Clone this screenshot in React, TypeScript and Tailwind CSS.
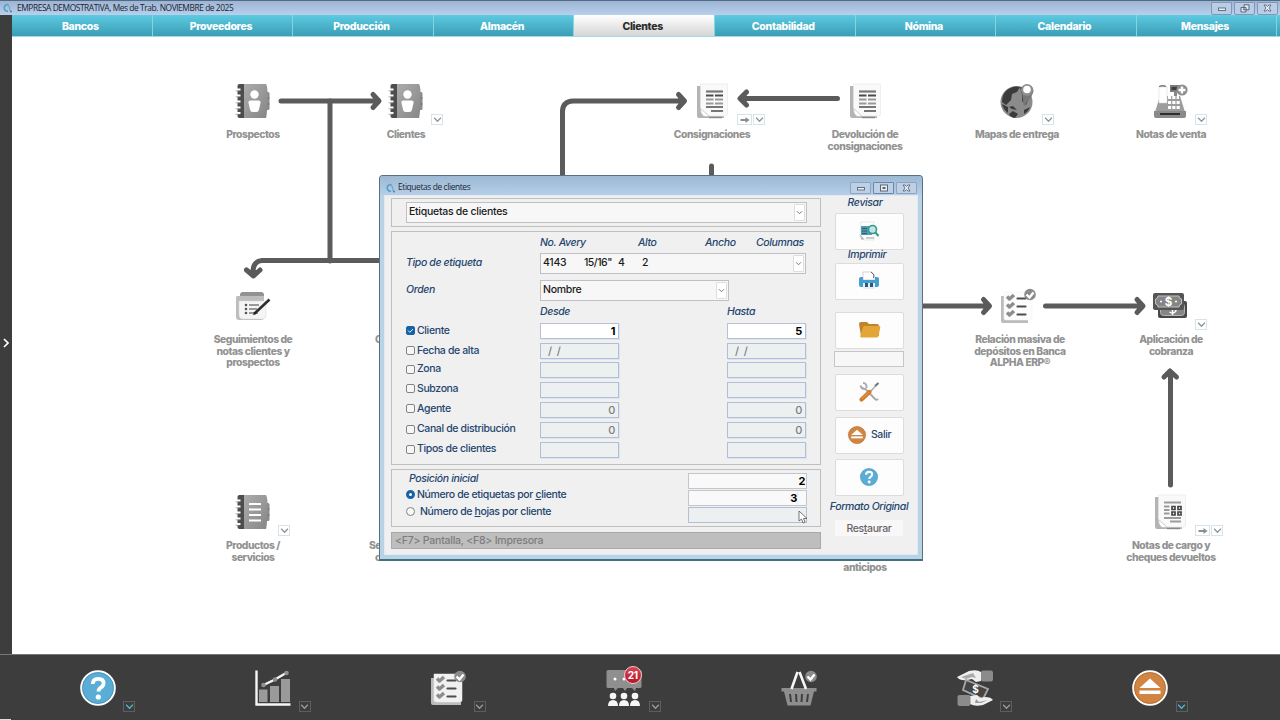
import React from 'react';

type Extra = 'menu' | 'both';

/* ---------- Icons ---------- */

const ContactBook = ({ list = false }: { list?: boolean }) => (
  <svg viewBox="0 0 36 36" className="w-9 h-9">
    <defs>
      <linearGradient id="cover" x1="0" y1="0" x2="1" y2="1">
        <stop offset="0" stopColor="#acacac" />
        <stop offset="1" stopColor="#868686" />
      </linearGradient>
    </defs>
    <rect x="30" y="9" width="4.500" height="18" rx="1.5" fill="#8b8b8b" />
    <path d="M30 15h4.500M30 21h4.500" stroke="#6d6d6d" strokeWidth="1" />
    <path d="M9 1h22q2 2.500 1.500 17T31 35H9z" fill="url(#cover)" />
    <path d="M4.500 1H9v34H4.500q-2 0-2-2V3q0-2 2-2z" fill="#4d4d4d" />
    <path d="M.500 6.500h5M.500 12.500h5M.500 18.500h5M.500 24.500h5M.500 30h5" stroke="#fff" strokeWidth="2" />
    <path d="M.500 7.800h4M.500 13.800h4M.500 19.800h4M.500 25.800h4M.500 31.300h4" stroke="#999" strokeWidth="0.7" />
    {list ? (
      <path d="M14 10h12M14 15.500h12M14 21h12M14 26.500h12" stroke="#fff" strokeWidth="2.200" />
    ) : (
      <>
        <circle cx="19.500" cy="11.500" r="4.200" fill="#fff" />
        <path d="M15.500 17.500h8q2.500 0 2 2.500l-1.500 6.500q-.5 2.500-2.500 2.500h-4q-2 0-2.500-2.500L13.500 20q-.5-2.500 2-2.500z" fill="#fff" />
      </>
    )}
  </svg>
);

const Invoice = ({ qr = false }: { qr?: boolean }) => (
  <svg viewBox="0 0 36 36" className="w-9 h-9">
    <path d="M3 3h27v32H5q-2 0-2-2z" fill="#b4b4b4" />
    <path d="M6.500 1h27v30q0 2-2 2H15L6.500 26z" fill="#f9f9f9" stroke="#e6e6e6" strokeWidth="0.6" />
    <path d="M6.500 25.500l9 8H10q-4-3-3.500-8z" fill="#fff" stroke="#aaa" strokeWidth="0.5" />
    <path d="M15 34.500h13" stroke="#888" strokeWidth="1.4" />
    {qr ? (
      <>
        <path d="M12 8.500h17M12 12.500h5.500M12 16h5.500M12 19.500h5.500M12 24h17M18 27.500h11" stroke="#9b9b9b" strokeWidth="1.800" />
        <path d="M20 12.500h3v3h-3zM26 12.500h3v3h-3zM20 18h3v3h-3zM26 18h3v3h-3z" fill="none" stroke="#444" strokeWidth="1.700" />
      </>
    ) : (
      <>
        <path d="M12 8.500h17" stroke="#777" strokeWidth="2.200" />
        <path d="M12 12.500h7.500M21 12.500h8" stroke="#4b4b4b" strokeWidth="2" />
        <path d="M12 16.500h7.500M21 16.500h8M12 20.500h7.500M21 20.500h8" stroke="#999" strokeWidth="2" />
        <path d="M12 24h17M17 28h12" stroke="#777" strokeWidth="1.800" />
      </>
    )}
  </svg>
);

const Globe = () => (
  <svg viewBox="0 0 36 36" className="w-9 h-9">
    <circle cx="17.500" cy="19" r="16" fill="#8b8b8b" />
    <path d="M8 7q7-5 13-3l-3 5-5 2-1 6-5 5-4-3q0-8 5-12zM21 4l5 1 5 8-4 9-4-4 0-6zM3 21l6 3 0 6q-5-4-6-9zM10 24l4-1 4 4-5-1zM25 27l6-3q-2 5-6 7zM14 28l5 3-3 4q-5-1-6-4z" fill="#3b3b3b" />
    <path d="M27.500 2q7 0 7 6 0 4-9.500 15-1-3-2-14Q23 2 27.500 2z" fill="#777" />
    <circle cx="28" cy="7" r="6" fill="#8e8e8e" />
    <circle cx="28" cy="6.500" r="3.800" fill="#fff" />
  </svg>
);

const Register = () => (
  <svg viewBox="0 0 36 36" className="w-9 h-9">
    <path d="M18 2h12v7H18z" fill="#7b7b7b" />
    <path d="M19.500 4h6v3h-6z" fill="#3f3f3f" />
    <path d="M22 8h3v5h-3z" fill="#888" />
    <path d="M8 13h20l5 16H3z" fill="#9d9d9d" />
    <path d="M2 28h32v5q0 2-2 2H4q-2 0-2-2z" fill="#8a8a8a" />
    <path d="M8 31h20" stroke="#2e2e2e" strokeWidth="2" />
    <path d="M7 4h8v16H7z" fill="#fff" stroke="#d5d5d5" strokeWidth="0.5" />
    <path d="M7 3.500q4-1.500 7 0" stroke="#777" strokeWidth="1.300" fill="none" />
    <path d="M16 14.500h11M16 19.500h12M16 24.500h12" stroke="#fff" strokeWidth="3.200" strokeDasharray="3.100 1.200" />
    <circle cx="30" cy="7" r="5.600" fill="#8d8d8d" />
    <path d="M30 3.500v7M26.500 7h7" stroke="#fff" strokeWidth="2.400" />
  </svg>
);

const NotePen = () => (
  <svg viewBox="0 0 36 36" className="w-9 h-9">
    <path d="M5 7q0-3 3-3h18q3 0 3 3v20H5z" fill="#929292" />
    <path d="M1 9q0-1 2-1h26v21q0 3-3 3H4q-3 0-3-3z" fill="#bdbdbd" />
    <path d="M4 13h27v13q0 5-4 5H8q-4 0-4-4z" fill="#f5f5f5" stroke="#d5d5d5" strokeWidth="0.5" />
    <circle cx="11" cy="17" r="1.300" fill="#555" />
    <circle cx="11" cy="21" r="1.300" fill="#555" />
    <circle cx="11" cy="25" r="1.300" fill="#555" />
    <path d="M14 17h10M14 21h8M14 25h9" stroke="#999" strokeWidth="1.800" />
    <path d="M19 26L34.500 11.500" stroke="#2c2c2c" strokeWidth="2.600" />
    <path d="M17.500 27.500l3-4 1.500 1.500z" fill="#222" />
  </svg>
);

const Checklist = ({ filled = false }: { filled?: boolean }) => (
  <svg viewBox="0 0 36 36" className="w-9 h-9">
    {filled ? (
      <path d="M1 8h4v24h26v3H3q-2 0-2-2z" fill="#bcbcbc" />
    ) : (
      <path d="M1 8h4v24h23v3H3q-2 0-2-2z" fill="#bcbcbc" />
    )}
    <path d="M4 4h28v26q0 2-2 2H6q-2 0-2-2z" fill={filled ? '#f1f1f1' : '#fcfcfc'} stroke={filled ? '#f1f1f1' : '#f0f0f0'} strokeWidth="0.500" />
    <path d="M7 8.500l2.500 2.500L14 7M7 16.500L9.500 19 14 15M7 24.500L9.500 27 14 23" fill="none" stroke="#8d8d8d" strokeWidth="3.400" strokeLinejoin="round" />
    <path d="M17.500 10.500h8M17.500 18.500h8M17.500 26.500h8" stroke="#4d4d4d" strokeWidth="2.200" strokeLinecap="round" />
    <circle cx="30" cy="6.500" r="5.800" fill="#8b8b8b" />
    <path d="M26.500 6.500l3 3 4-5" fill="none" stroke="#fff" strokeWidth="2.400" />
  </svg>
);

const Bills = () => (
  <svg viewBox="0 0 36 36" className="w-9 h-9 font-['Inter',sans-serif]">
    <rect x="6" y="13" width="29" height="17" rx="2" fill="#484848" />
    <rect x="8.500" y="15.500" width="24" height="12" rx="3" fill="#858585" stroke="#b5b5b5" strokeWidth="1" />
    <path d="M17.500 24q3 2 5.500 0t-1-3M20.500 22v5" fill="none" stroke="#fff" strokeWidth="1.500" />
    <rect x="1" y="5" width="31" height="17" rx="2" fill="#555" />
    <path d="M6 8h21q0 3 2.500 3v5q-2.500 0-2.500 3H6q0-3-2.500-3v-5Q6 11 6 8z" fill="#858585" stroke="#c2c2c2" strokeWidth="1" />
    <text x="16.500" y="17.700" textAnchor="middle" fontSize="11.500" fontWeight="700" fill="#fff">$</text>
    <path d="M8 13.500h2M23 13.500h2" stroke="#fff" strokeWidth="1.500" />
  </svg>
);

const HelpCircle = () => (
  <svg viewBox="0 0 36 36" className="w-full h-full">
    <circle cx="18" cy="18" r="16.800" fill="#5aaed6" stroke="#fff" strokeWidth="2" />
    <circle cx="18" cy="18" r="15.500" fill="none" stroke="#4187ae" strokeWidth="0.700" />
    <path d="M12.800 14q0-5.200 5.500-5.200 5.300 0 5.300 4.500 0 2.500-2.800 4.300-2.300 1.400-2.300 4" fill="none" stroke="#fff" strokeWidth="3.800" />
    <circle cx="18.300" cy="27" r="2.600" fill="#fff" />
  </svg>
);

const ExitCircle = () => (
  <svg viewBox="0 0 36 36" className="w-full h-full">
    <circle cx="18" cy="18" r="16.800" fill="#d08543" stroke="#fff" strokeWidth="2" />
    <circle cx="18" cy="18" r="15.500" fill="none" stroke="#a96429" strokeWidth="0.700" />
    <path d="M18 8.500L28.500 18h-21z" fill="#fff" />
    <path d="M7.500 20.500h21v3.500h-21z" fill="#fff" />
  </svg>
);

const ChartIcon = () => (
  <svg viewBox="0 0 36 36" className="w-9 h-9">
    <path d="M4 19.500h8.500V32H4zM15 16h9v16h-9zM26 9h9v23h-9z" fill="#9a9a9a" />
    <path d="M1.500 0.500v34h34" fill="none" stroke="#f6f6f6" strokeWidth="2.400" />
    <path d="M8.500 15L20 9.500 31 3" fill="none" stroke="#f5f5f5" strokeWidth="2.400" />
    <circle cx="8.500" cy="15" r="2.300" fill="#909090" />
    <circle cx="20" cy="9.500" r="2.300" fill="#909090" />
    <circle cx="31.500" cy="3" r="2.300" fill="#909090" />
  </svg>
);

const Meeting = () => (
  <svg viewBox="0 0 36 36" className="w-9 h-9">
    <path d="M2 0h32q1.500 0 1.500 1.500v15q0 1.500-1.500 1.500h-4l-1 3-3-3h-5l-2 3-2-3h-5l-3 3-1-3H2q-1.500 0-1.500-1.500v-15Q.500 0 2 0z" fill="#8f8f8f" />
    <circle cx="9" cy="9" r="1.500" fill="#fff" />
    <circle cx="18" cy="9" r="1.500" fill="#fff" />
    <path d="M2 36q0-6 5-6t5 6zM13 36q0-6 5-6t5 6zM24 36q0-6 5-6t5 6z" fill="#f6f6f6" />
    <circle cx="7" cy="26" r="3.300" fill="#f6f6f6" />
    <circle cx="18" cy="26" r="3.300" fill="#f6f6f6" />
    <circle cx="29" cy="26" r="3.300" fill="#f6f6f6" />
  </svg>
);

const Basket = () => (
  <svg viewBox="0 0 36 36" className="w-9 h-9">
    <path d="M.500 18h35v3.500H33L29.500 35.500h-23L3 21.500H.500z" fill="#8e8e8e" />
    <path d="M9 24l1 8M15 24l.500 8M21 24l-.500 8M27 24l-1 8" stroke="#3f3f3f" strokeWidth="2" />
    <path d="M16.500 2L10.500 19M18.500 2l6.500 17" stroke="#f5f5f5" strokeWidth="2.600" />
    <circle cx="30" cy="6.500" r="5.800" fill="#8b8b8b" />
    <path d="M26.500 6.500l3 3 4-5" fill="none" stroke="#fff" strokeWidth="2.400" />
  </svg>
);

const Payment = () => (
  <svg viewBox="0 0 36 36" className="w-9 h-9 font-['Inter',sans-serif]">
    <path d="M0 7L12 1q8-2 12 1v9l-5 1-4-3-5 1q-7 1-10-3z" fill="#efefef" />
    <path d="M4 7l12-4 3 5-4-1-6 2z" fill="#a9a9a9" />
    <rect x="24" y="0.500" width="12" height="11" rx="2" fill="#8b8b8b" />
    <path d="M9 10l22 9-5 10-20-9z" fill="#444" stroke="#a7a7a7" strokeWidth="1.800" />
    <text x="18.500" y="22.500" textAnchor="middle" fontSize="10" fontWeight="700" fill="#fff">$</text>
    <path d="M36 30l-10 5q-8 2-13-1v-8l7-1 3 3 5-1q6 0 8 3z" fill="#efefef" />
    <path d="M19 29l3 3 9-2-7 3h-6z" fill="#999" />
    <rect x="0.500" y="25" width="13" height="11" rx="2" fill="#8b8b8b" />
  </svg>
);

const Logo = () => (
  <svg viewBox="0 0 10 10" className="w-[10px] h-[10px] shrink-0">
    <path d="M6.500 1.800A3.300 3.300 0 1 0 6 8.200" fill="none" stroke="#4da0ca" strokeWidth="1.600" />
    <path d="M5 1.500q3 1 3 6.500" fill="none" stroke="#7da4c5" strokeWidth="1.300" />
    <circle cx="9" cy="8.500" r="0.900" fill="#327faf" />
  </svg>
);

const ReviewIcon = () => (
  <svg viewBox="0 0 22 22" className="w-[22px] h-[22px]">
    <path d="M3 2h13v18H5l-3-4z" fill="#fff" stroke="#dedede" strokeWidth="0.700" />
    <path d="M1.500 14l5 5-3 1z" fill="#bbb" />
    <path d="M3 6h11v9H3z" fill="#4b9fb2" />
    <path d="M4 8.500h5M4 11h5M4 13.500h5" stroke="#365c68" strokeWidth="1.100" />
    <path d="M8 18h8" stroke="#999" strokeWidth="1" />
    <circle cx="14.500" cy="9.500" r="4" fill="#bfe3ef" stroke="#369a85" strokeWidth="1.600" />
    <path d="M17.500 12.500l3 3.500" stroke="#369a85" strokeWidth="2" />
  </svg>
);

const PrintIcon = () => (
  <svg viewBox="0 0 22 22" className="w-[22px] h-[22px]">
    <path d="M5 2h9l2 3v5H5z" fill="#fff" stroke="#bbb" strokeWidth="0.600" />
    <path d="M13 2l3 3-.500 3" stroke="#666" strokeWidth="1" fill="none" />
    <path d="M3 7h2v3h12V7h2q2 0 2 2v6q0 2-2 2H3q-2 0-2-2V9q0-2 2-2z" fill="#449fd0" />
    <path d="M5 13h12v5q0 1-1 1H6q-1 0-1-1z" fill="#e3eff6" />
    <path d="M7 13h3v4H7zM12 13h3v4h-3z" fill="#2c5873" />
  </svg>
);

const FolderIcon = () => (
  <svg viewBox="0 0 24 20" className="w-6 h-5">
    <path d="M2 4q0-2 2-2h6l2 2h8q2 0 2 2v10H4z" fill="#c0822c" />
    <path d="M6 7q.300-1 1.500-1H22q1.500 0 1.300 1.500L21.500 16q-.300 1.500-2 1.500H5q-2 0-1.800-1z" fill="#e3a536" />
  </svg>
);

const ToolsIcon = () => (
  <svg viewBox="0 0 22 22" className="w-[22px] h-[22px]">
    <path d="M2.500 4.500q1 4 5 3.500l9.500 10q1.500 1.500 3 0M5 2q4 0 3.500 5" fill="none" stroke="#aaa" strokeWidth="2" />
    <path d="M12 11l7-7.500" stroke="#aaa" strokeWidth="1.400" />
    <path d="M17 5l3.500-3" stroke="#777" strokeWidth="2.200" />
    <path d="M3.500 18.500l8-7.500" stroke="#d27b2b" strokeWidth="4.200" strokeLinecap="round" />
    <path d="M4 17.500l6.500-6" stroke="#efa45d" strokeWidth="1" />
  </svg>
);

const Chevron = ({ className }: { className?: string }) => (
  <svg viewBox="0 0 8 6" className={className}>
    <path d="M1 1.500l3 3 3-3" fill="none" stroke="currentColor" strokeWidth="1.200" />
  </svg>
);

const CloseMark = () => (
  <svg viewBox="0 0 9 8" className="w-[9px] h-2">
    <path d="M1 1h2l1.500 1.500L6 1h2L6 4l2 3H6L4.500 5.500 3 7H1l2-3z" fill="#eef2f8" stroke="#59677a" strokeWidth="0.900" />
  </svg>
);

/* ---------- Main window ---------- */

const WindowButtons = () => (
  <div className="flex gap-[2px] text-[#59677a]">
    <span className="w-[21px] h-[13px] border border-[#8397b3] bg-[#b9cde6] rounded-b-[2px] flex items-center justify-center">
      <svg viewBox="0 0 10 8" className="w-[10px] h-2"><rect x="1.500" y="4" width="7" height="2.500" fill="#eee" stroke="currentColor" strokeWidth="0.900" /></svg>
    </span>
    <span className="w-[21px] h-[13px] border border-[#8397b3] bg-[#b9cde6] rounded-b-[2px] flex items-center justify-center">
      <svg viewBox="0 0 10 9" className="w-[10px] h-[9px]"><path d="M4 .800h5v5H4zM1 3.500h5v4.500H1z" fill="#e3e9f2" stroke="currentColor" strokeWidth="1" /><path d="M3 5.500h1" stroke="currentColor" /></svg>
    </span>
    <span className="w-[21px] h-[13px] border border-[#8397b3] bg-[#b9cde6] rounded-b-[2px] flex items-center justify-center">
      <CloseMark />
    </span>
  </div>
);

const tabs = ['Bancos', 'Proveedores', 'Producción', 'Almacén', 'Clientes', 'Contabilidad', 'Nómina', 'Calendario', 'Mensajes'];

const nodes: { pos: string; icon: React.ReactNode; label: string[]; extra?: Extra; labelClass?: string }[] = [
  { pos: 'left-[171px] top-[46px]', icon: <ContactBook />, label: ['Prospectos'] },
  { pos: 'left-[324px] top-[46px]', icon: <ContactBook />, label: ['Clientes'], extra: 'menu' },
  { pos: 'left-[630px] top-[46px]', icon: <Invoice />, label: ['Consignaciones'], extra: 'both' },
  { pos: 'left-[783px] top-[46px]', icon: <Invoice />, label: ['Devolución de', 'consignaciones'] },
  { pos: 'left-[935px] top-[46px]', icon: <Globe />, label: ['Mapas de entrega'], extra: 'menu' },
  { pos: 'left-[1088px] top-[46px]', icon: <Register />, label: ['Notas de venta'], extra: 'menu', labelClass: 'pl-[2px]' },
  { pos: 'left-[171px] top-[251px]', icon: <NotePen />, label: ['Seguimientos de', 'notas clientes y', 'prospectos'] },
  { pos: 'left-[936px] top-[251px]', icon: <Checklist />, label: ['Relación masiva de', 'depósitos en Banca', 'ALPHA ERP®'], labelClass: 'pl-1' },
  { pos: 'left-[1088px] top-[251px]', icon: <Bills />, label: ['Aplicación de', 'cobranza'], extra: 'menu', labelClass: 'pl-[2px]' },
  { pos: 'left-[171px] top-[457px]', icon: <ContactBook list />, label: ['Productos /', 'servicios'], extra: 'menu' },
  { pos: 'left-[1088px] top-[457px]', icon: <Invoice qr />, label: ['Notas de cargo y', 'cheques devueltos'], extra: 'both', labelClass: 'pl-[2px]' },
];

const FlowNode = ({ pos, icon, label, extra, labelClass = '' }: (typeof nodes)[number]) => (
  <div className={`absolute w-[140px] flex flex-col items-center ${pos}`}>
    {icon}
    <div className={`mt-[10px] text-center text-[10.3px] leading-[11.5px] tracking-[-0.45px] font-extrabold text-[#929292] whitespace-nowrap ${labelClass}`}>
      {label.map((line) => (
        <div key={line}>{line}</div>
      ))}
    </div>
    {extra && (
      <div className={`absolute top-[31px] flex gap-px text-[#8f979c] ${extra === 'both' ? 'left-[95px]' : 'left-[95px]'}`}>
        {extra === 'both' && (
          <span className="w-[15px] h-[11px] border border-[#d3e4ea] bg-white flex items-center justify-center">
            <svg viewBox="0 0 10 6" className="w-[10px] h-[6px]"><path d="M.500 3h6" stroke="#8c8c8c" strokeWidth="2" /><path d="M5.500 0L9.500 3l-4 3z" fill="#8c8c8c" /></svg>
          </span>
        )}
        <span className="w-3 h-[11px] border border-[#d3e4ea] bg-white flex items-center justify-center">
          <Chevron className="w-[9px] h-[7px]" />
        </span>
      </div>
    )}
  </div>
);

const Connectors = () => (
  <svg viewBox="12 37 1268 617" className="absolute inset-0 w-[1268px] h-[617px]">
    <g fill="none" stroke="#5b5b5b" strokeWidth="5" strokeLinecap="round" strokeLinejoin="round">
      <path d="M281 101H378M373 94.500L379 101L373 107.500" />
      <path d="M330 101V261M385 260.500H262Q254 261 253 270V275M246.500 270L253.500 276L260 270" />
      <path d="M562.500 180V111Q563 101.500 573 101H684M678.500 94.500L684.500 101L678.500 107.500" />
      <path d="M837.500 98.500H741M746.500 92L740 98.500L746.500 105" />
      <path d="M711.500 166V180" />
      <path d="M915 306H989M983.500 299.500L989.500 306L983.500 312.500" />
      <path d="M1045.500 306H1142M1137 299.500L1143 306L1137 312.500" />
      <path d="M1170.500 485V372M1164 377L1170 371L1176.500 377" />
    </g>
    <g fill="#5b5b5b">
      <path d="M373 94v14l7-7zM678.500 94v14l7-7zM746.500 91.500v14l-7-7zM983.500 299v14l7-7zM1137 299v14l7-7zM1163.500 377h13.500l-7-7zM246 270h14.500l-7 7z" />
    </g>
  </svg>
);

const dock: { icon: React.ReactNode; menu?: string; badge?: string }[] = [
  { icon: <HelpCircle />, menu: 'text-[#4fb6cc]' },
  { icon: <ChartIcon />, menu: 'text-[#9a9a9a]' },
  { icon: <Checklist filled />, menu: 'text-[#9a9a9a]' },
  { icon: <Meeting />, menu: 'text-[#9a9a9a]', badge: '21' },
  { icon: <Basket /> },
  { icon: <Payment />, menu: 'text-[#9a9a9a]' },
  { icon: <ExitCircle />, menu: 'text-[#4fb6cc]' },
];

const Dock = () => (
  <footer className="relative h-[66px] shrink-0 bg-[#3d3d3d] border-t border-[#777] flex pl-[10px]">
    {dock.map((item, index) => (
      <div key={index} className="w-[175.4px] flex justify-center pt-[15px]">
        <div className="relative w-9 h-9">
          {item.icon}
          {item.badge && (
            <span className="absolute left-[18px] -top-1 w-[18px] h-[18px] rounded-full border border-[#f0c9cd] bg-gradient-to-b from-[#dc4353] to-[#b70f27] text-white text-[10px] leading-4 tracking-[-0.3px] font-bold text-center">
              {item.badge}
            </span>
          )}
          {item.menu && (
            <span className={`absolute left-[43.5px] top-[31px] w-3 h-[11px] border border-[#5c5f61] flex items-center justify-center ${item.menu}`}>
              <Chevron className="w-[9px] h-[7px]" />
            </span>
          )}
        </div>
      </div>
    ))}
    <span className="absolute left-0 bottom-0 w-[11px] h-px bg-[#ddd]" />
  </footer>
);

/* ---------- Dialog ---------- */

const DropButton = () => (
  <span className="w-[11px] h-[17px] mr-px border border-[#dedede] bg-white text-[#777] flex items-center justify-center rounded-[1px]">
    <Chevron className="w-[7px] h-[5px]" />
  </span>
);

const SelectBox = ({ className, children }: { className: string; children: React.ReactNode }) => (
  <div className={`h-[21px] border border-[#bfbfc4] bg-[#f7f7f7] flex items-center pl-[2px] text-[10.5px] tracking-[-0.27px] font-medium text-[#1b1b1b] whitespace-pre ${className}`}>
    <div className="flex-1 flex -mt-px">{children}</div>
    <DropButton />
  </div>
);

const Field = ({ value, on }: { value?: string; on?: boolean }) => (
  <span
    className={`w-[79px] h-[16px] mt-px border shadow-[1px_1px_0_0px_#dde4f1] text-[11px] leading-[15px] pr-[3px] text-right whitespace-pre ${
      on ? 'border-[#b8c1d3] bg-white font-bold text-black' : 'border-[#b1bed5] bg-[#ecf0f1] text-[#7d7d7d]'
    }`}
  >
    {value === '/  /' ? <span className="block text-left pl-[7px]">{value}</span> : value}
  </span>
);

const filters = [
  { name: 'Cliente', from: '1', to: '5', on: true, row: 'h-5', text: 'leading-[17px]' },
  { name: 'Fecha de alta', from: '/  /', to: '/  /', row: 'h-[19px]', text: 'leading-[17px]' },
  { name: 'Zona', row: 'h-5', text: 'leading-4' },
  { name: 'Subzona', row: 'h-5', text: 'leading-[15px]' },
  { name: 'Agente', from: '0', to: '0', row: 'h-5', text: 'leading-[15px]' },
  { name: 'Canal de distribución', from: '0', to: '0', row: 'h-5', text: 'leading-4' },
  { name: 'Tipos de clientes', row: 'h-5', text: 'leading-4' },
];

const SideButton = ({ className = '', children }: { className?: string; children: React.ReactNode }) => (
  <button className={`w-[69px] h-[37px] shrink-0 rounded-[2px] border border-[#dcdcdc] bg-[#fdfdfd] flex items-center justify-center pb-[2px] ${className}`}>
    {children}
  </button>
);

const Dialog = () => (
  <div className="absolute left-[379px] top-[175px] w-[544px] h-[386px] flex flex-col rounded-t-[4px] border border-[#58707f] border-b-2 border-b-[#41707f] bg-[#b7d3e5] text-[#24466f]">
    <header className="h-[19px] shrink-0 rounded-t-[3px] bg-gradient-to-b from-[#9cb8d2] to-[#b6cfe9] flex items-center pl-[5px] pr-[5px] pt-[4px]">
      <Logo />
      <span className="flex-1 pl-[3px] font-['Open_Sans','Noto_Sans',sans-serif] text-[8.4px] leading-none tracking-[-0.38px] text-[#1a2430]">Etiquetas de clientes</span>
      <div className="flex gap-[2px] text-[#59677a]">
        <span className="w-[21px] h-3 border border-[#8ea4be] bg-[#bdd0e6] rounded-[1px] flex items-center justify-center">
          <svg viewBox="0 0 10 8" className="w-[10px] h-2"><rect x="1.500" y="3.500" width="7" height="2.500" fill="#eee" stroke="currentColor" strokeWidth="0.900" /></svg>
        </span>
        <span className="w-[21px] h-3 border border-[#6c85a8] bg-[#bdd0e6] rounded-[1px] flex items-center justify-center">
          <svg viewBox="0 0 10 8" className="w-[10px] h-2"><rect x="1.500" y="1" width="7" height="6" fill="#eee" stroke="currentColor" /><rect x="3.500" y="3" width="3" height="2" fill="currentColor" /></svg>
        </span>
        <span className="w-[21px] h-3 border border-[#8ea4be] bg-[#bdd0e6] rounded-[1px] flex items-center justify-center">
          <CloseMark />
        </span>
      </div>
    </header>

    <div className="flex-1 mx-1 mb-1 bg-[#f0f0f0] border border-[#e3e9f2] flex pl-[6px] pt-[2px]">
      <div className="w-[430px] shrink-0 flex flex-col font-medium tracking-[-0.37px]">
        {/* Format */}
        <section className="h-[29px] border border-[#bfbfbf] pl-[14px] pt-[3px]">
          <SelectBox className="w-[401px]">Etiquetas de clientes</SelectBox>
        </section>

        {/* Label type and filters */}
        <section className="mt-1 h-[234px] border border-[#bfbfbf] pl-[14px] text-[10.5px]">
          <div className="h-[21px] flex items-center italic pl-[134px]">
            <span className="w-[98px]">No. Avery</span>
            <span className="w-[67px]">Alto</span>
            <span className="w-[51px]">Ancho</span>
            <span>Columnas</span>
          </div>
          <div className="h-[21px] flex">
            <span className="w-[134px] italic leading-[20px]">Tipo de etiqueta</span>
            <SelectBox className="w-[266px]">
              <span className="w-[41px]">4143</span>
              <span className="w-[34px] tracking-[-0.5px]">15/16"</span>
              <span className="w-6">4</span>
              <span>2</span>
            </SelectBox>
          </div>
          <div className="mt-[6px] h-[21px] flex">
            <span className="w-[134px] italic leading-[20px]">Orden</span>
            <SelectBox className="w-[189px]">Nombre</SelectBox>
          </div>
          <div className="h-[21px] leading-[21px] flex italic pl-[134px]">
            <span className="w-[187px]">Desde</span>
            <span>Hasta</span>
          </div>
          {filters.map((f) => (
            <div key={f.name} className={`flex items-start ${f.row}`}>
              <label className={`w-[134px] flex items-center ${f.text}`}>
                <span className={`w-[9px] h-[9px] mr-[2px] rounded-[2px] border flex items-center justify-center ${f.on ? 'bg-[#1462a8] border-[#1462a8]' : 'bg-[#f6f6f6] border-[#838383]'}`}>
                  {f.on && (
                    <svg viewBox="0 0 7 7" className="w-[7px] h-[7px]"><path d="M1 3.500l1.800 1.800L6 2" fill="none" stroke="#fff" strokeWidth="0.900" /></svg>
                  )}
                </span>
                {f.name}
              </label>
              <Field value={f.from} on={f.on} />
              <span className="w-[108px]" />
              <Field value={f.to} on={f.on} />
            </div>
          ))}
        </section>

        {/* Start position and copies */}
        <section className="mt-1 h-[58px] border border-[#bfbfbf] pl-[14px] pt-[3px] text-[10.5px] flex">
          <div className="w-[282px] -mt-px">
            <div className="italic leading-[13px] pl-[3px]">Posición inicial</div>
            <label className="mt-px flex items-center h-[17px]">
              <span className="w-[9px] h-[9px] mr-[2px] rounded-full border-[3px] border-[#1462a8] bg-white" />
              <span>Número de etiquetas por <u>c</u>liente</span>
            </label>
            <label className="flex items-center h-[17px]">
              <span className="w-[9px] h-[9px] mr-[5px] rounded-full border border-[#838383] bg-[#f8f8f8]" />
              <span>Número de <u>h</u>ojas por cliente</span>
            </label>
          </div>
          <div className="w-[119px] flex flex-col gap-px text-[11px] leading-[14px] font-bold text-black text-right">
            <span className="h-4 border border-[#c3c6ca] bg-[#f9f9f9] pr-px">2</span>
            <span className="h-4 border border-[#c3c6ca] bg-[#f9f9f9] flex justify-end">
              <span className="w-[9px] border-l border-[#ececec] order-2" />
              <span>3</span>
            </span>
            <span className="h-4 border border-[#b1bed5] bg-[#ecf0f1]" />
          </div>
        </section>

        <div className="mt-[5px] h-[17px] border border-[#a9a9a9] bg-[#bebebe] pl-[3px] text-[10.5px] leading-[15px] tracking-[-0.23px] text-[#7c7c7c]">
          &lt;F7&gt; Pantalla, &lt;F8&gt; Impresora
        </div>
      </div>

      {/* Actions */}
      <div className="flex-1 flex flex-col items-center text-[10.5px] font-medium tracking-[-0.37px]">
        <span className="italic leading-[14px] h-[15px] -mt-[2px] pr-2">Revisar</span>
        <SideButton className="mt-[2px]"><ReviewIcon /></SideButton>
        <span className="italic leading-[10px] h-[13px] pr-1">Imprimir</span>
        <SideButton><PrintIcon /></SideButton>
        <SideButton className="mt-3"><FolderIcon /></SideButton>
        <span className="w-[70px] h-4 mt-[2px] shrink-0 border border-[#c6c6c6] bg-[#f7f7f7]" />
        <SideButton className="mt-[7px]"><ToolsIcon /></SideButton>
        <SideButton className="mt-[6px] gap-1">
          <span className="w-5 h-5"><ExitCircle /></span>
          <span>Salir</span>
        </SideButton>
        <SideButton className="mt-[5px]"><span className="w-5 h-5"><HelpCircle /></span></SideButton>
        <span className="italic h-6 leading-[22px] whitespace-nowrap">Formato Original</span>
        <span className="w-[68px] h-4 bg-[#f8f8f8] text-[#666] leading-[17px] text-center">Res<u>t</u>aurar</span>
      </div>
    </div>
  </div>
);

const Cursor = () => (
  <svg viewBox="0 0 10 14" className="absolute left-[798px] top-[510px] w-[10px] h-[14px]">
    <path d="M1 1v10l2.500-2L5 13l2-1-1.500-3.500H9z" fill="#fff" stroke="#555" strokeWidth="0.800" />
  </svg>
);

export default function App() {
  return (
    <div className="relative w-[1280px] h-[720px] overflow-hidden flex flex-col bg-white font-['Inter','Liberation_Sans',sans-serif]">
      <header className="h-[15px] shrink-0 border-t border-[#526b85] bg-gradient-to-b from-[#9db4d3] to-[#b8d0ec] flex items-center pl-[2px] pr-[2px]">
        <Logo />
        <span className="flex-1 pl-[5px] font-['Open_Sans','Noto_Sans',sans-serif] text-[8.4px] leading-none tracking-[-0.43px] text-[#1a2430]">
          EMPRESA DEMOSTRATIVA, Mes de Trab. NOVIEMBRE de 2025
        </span>
        <WindowButtons />
      </header>

      <div className="flex-1 flex">
        <aside className="w-3 shrink-0 bg-[#3d3d3d] flex items-center justify-center text-white">
          <svg viewBox="0 0 6 10" className="w-[6px] h-[10px] mt-[17px]"><path d="M1 1l4 4-4 4" fill="none" stroke="currentColor" strokeWidth="1.700" /></svg>
        </aside>
        <div className="flex-1 flex flex-col">
          <nav className="h-[22px] flex bg-gradient-to-b from-[#5dcbe2] to-[#3a9db5] border-b border-[#9fdbe8] text-[10.5px] tracking-[-0.3px] font-extrabold">
            {tabs.map((tab) => (
              <a
                key={tab}
                className={`w-[140.6px] flex items-center justify-center border-r border-[#84d4e4] pr-[3px] pt-[3px] ${
                  tab === 'Clientes' ? 'bg-gradient-to-b from-white to-[#d5d5d5] text-[#2b2b2b]' : 'text-white'
                }`}
              >
                {tab}
              </a>
            ))}
          </nav>
          <main className="relative flex-1">
            <Connectors />
            {nodes.map((node) => (
              <FlowNode key={node.label.join(' ')} {...node} />
            ))}
            {/* Labels of nodes that sit under the dialog */}
            <div className="absolute left-[363px] top-[297px] text-[10.3px] leading-[11.5px] font-extrabold text-[#929292]">C</div>
            <div className="absolute left-[357px] top-[503px] text-[10.3px] leading-[11.5px] tracking-[-0.45px] font-extrabold text-[#929292]">
              <div>Se</div>
              <div className="pl-[6px]">c</div>
            </div>
            <div className="absolute left-[783px] top-[525px] w-[140px] text-center text-[10.3px] leading-[11.5px] tracking-[-0.45px] font-extrabold text-[#929292]">anticipos</div>
          </main>
        </div>
      </div>

      <Dock />
      <Dialog />
      <Cursor />
    </div>
  );
}
